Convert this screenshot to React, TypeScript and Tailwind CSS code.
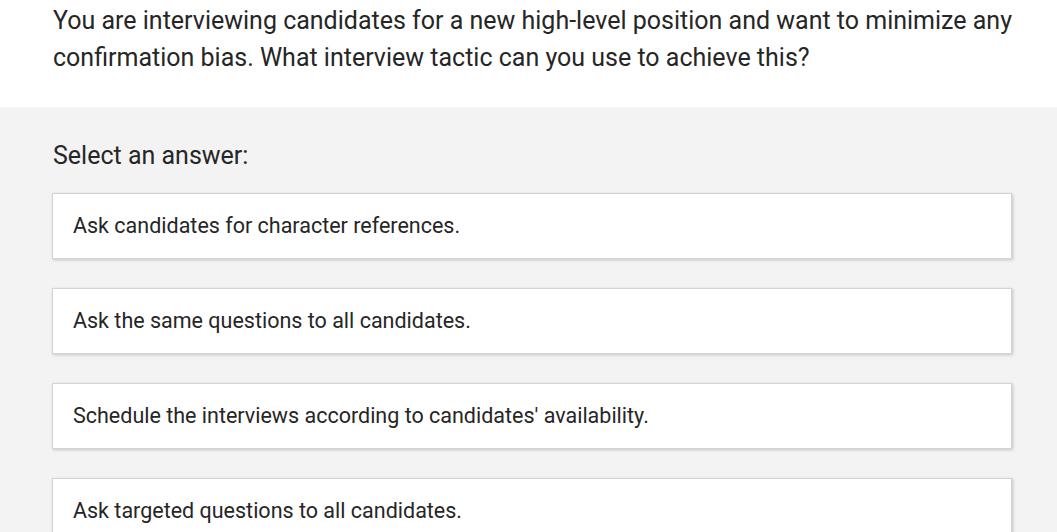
const answers = [
  'Ask candidates for character references.',
  'Ask the same questions to all candidates.',
  "Schedule the interviews according to candidates' availability.",
  'Ask targeted questions to all candidates.',
]

export default function App() {
  return (
    <div className="h-[532px] overflow-hidden bg-[#f3f3f3] font-['Roboto',sans-serif] text-[#262626]">
      {/* Question */}
      <div className="bg-white pl-[53px] pr-[30px] pt-[2px] pb-[31px]">
        <p className="text-[25px] leading-[37px]">
          You are interviewing candidates for a new high-level position and want to minimize any
          confirmation bias. What interview tactic can you use to achieve this?
        </p>
      </div>

      {/* Answers */}
      <div className="px-[52px] pt-[32px]">
        <p className="text-[25px] leading-[33px] pl-px">Select an answer:</p>
        <div className="mt-[21px] flex w-[960px] flex-col gap-[29px]">
          {answers.map((a) => (
            <div
              key={a}
              className="flex h-[66px] items-center border border-[#d4d4d4] bg-white px-5 text-[21.5px] shadow-[1px_1px_3px_rgba(0,0,0,0.2)]"
            >
              {a}
            </div>
          ))}
        </div>
      </div>
    </div>
  )
}
